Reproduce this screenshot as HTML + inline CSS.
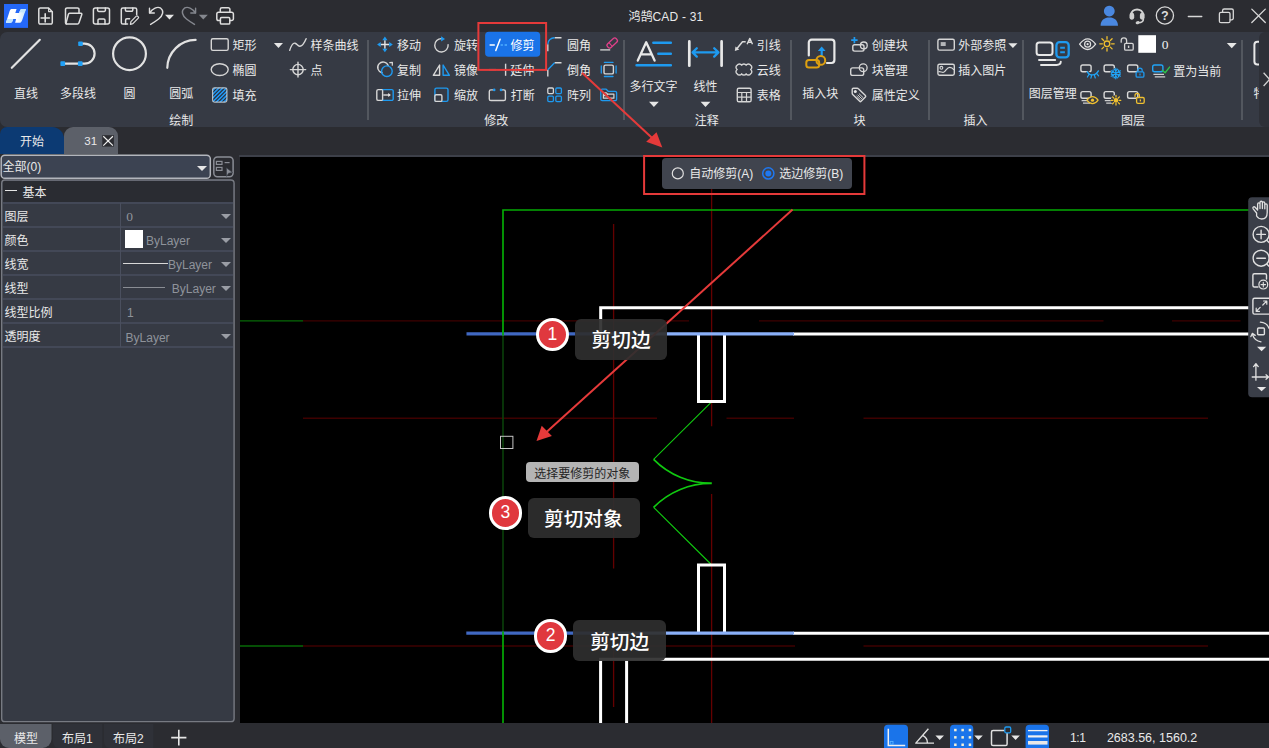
<!DOCTYPE html>
<html lang="zh-CN">
<head>
<meta charset="utf-8">
<title>鸿鹄CAD - 31</title>
<style>
*{box-sizing:border-box;margin:0;padding:0}
html,body{width:1269px;height:748px;overflow:hidden;background:#2b2c31}
body{position:relative;font-family:"Liberation Sans","Noto Sans CJK SC",sans-serif;font-size:12px;color:#e8e8e8}
.abs{position:absolute}
.t{position:absolute;white-space:nowrap;line-height:14px;font-size:12px;color:#e9e9e9}
#titlebar{left:0;top:0;width:1269px;height:32px;background:#2b2c31}
#ribbon{left:0;top:32px;width:1269px;height:95px;background:#363a44;border-radius:7px 0 0 7px}
#scroller{left:1259px;top:32px;width:10px;height:95px;background:#2e3037;border-radius:6px 0 0 6px}
.sep{position:absolute;top:40px;width:2px;height:80px;background:#53575f}
#tabstrip{left:0;top:127px;width:1269px;height:28px;background:#2b2c31}
#tab1{left:0;top:127px;width:64px;height:27px;background:#0c3a73;border-radius:7px 12px 0 0}
#tab2{left:64px;top:127px;width:54px;height:27px;background:#5c6069;border-radius:9px 9px 0 0}
#canvas{left:240px;top:157px;width:1029px;height:566px;background:#000}
#cborder{left:239px;top:155px;width:1030px;height:2px;background:#3d4049}
#status{left:0;top:723px;width:1269px;height:25px;background:#2b2c31}
/* property panel */
#combo{left:1px;top:155px;width:209px;height:23px;background:#3c4352;border-radius:4px}
#listbtn{left:213px;top:156px;width:21px;height:22px;border-radius:5px}
#panel{left:1px;top:180px;width:233px;height:542px;background:#363a44;border-radius:4px}
#phead{left:3px;top:181px;width:230px;height:21px;background:#2a2c32}
.row{position:absolute;left:3px;width:230px;height:2px;background:#434857}
#colsep{left:120px;top:203px;width:1px;height:144px;background:#4a4f5e}
.v{color:#8f939b}
.tri{position:absolute;width:0;height:0;border-left:5px solid transparent;border-right:5px solid transparent;border-top:5px solid #e6e6e6}
.trig{border-top-color:#9a9da5}

.c{display:inline-block}
.lab{background:rgba(46,46,46,.93);border-radius:6px}
.lt{font-size:19.7px;color:#fff;font-weight:500}
.badge{width:33.4px;height:33.4px;border-radius:50%;background:#e0383e;border:3px solid #fff;color:#fff;font-size:17.5px;line-height:27.4px;text-align:center}
</style>
</head>
<body>
<div id="titlebar" class="abs"></div>
<div id="ribbon" class="abs"></div>
<div class="sep" style="left:367.2px"></div>
<div class="sep" style="left:623px"></div>
<div class="sep" style="left:789.6px"></div>
<div class="sep" style="left:928.2px"></div>
<div class="sep" style="left:1022.2px"></div>
<div class="sep" style="left:1241px"></div>
<div id="tabstrip" class="abs"></div>
<div id="tab1" class="abs"></div>
<div id="tab2" class="abs"></div>
<div id="status" class="abs"></div>
<div id="cborder" class="abs"></div>
<div id="canvas" class="abs"></div>

<!-- PROPERTY PANEL -->
<div id="combo" class="abs"></div>
<div id="listbtn" class="abs"></div>
<div id="panel" class="abs"></div>
<div id="phead" class="abs"></div>
<div class="row" style="top:202px"></div>
<div class="row" style="top:226px"></div>
<div class="row" style="top:250px"></div>
<div class="row" style="top:274px"></div>
<div class="row" style="top:298px"></div>
<div class="row" style="top:322px"></div>
<div class="row" style="top:346px"></div>
<div id="colsep" class="abs"></div>
<svg class="abs" style="left:0;top:0" width="1269" height="748" viewBox="0 0 1269 748">
<!-- title bar -->
<g>
<defs>
<linearGradient id="lg1" x1="0" y1="0" x2="1" y2="0"><stop offset="0.55" stop-color="#fff"/><stop offset="1" stop-color="#c4e4fb"/></linearGradient>
</defs>
<rect x="4" y="4" width="24" height="23.9" fill="#2468f8"/>
<path d="M11.4 8.9 H16.6 L15.3 12.9 H19 L20.4 9.8 Q20.8 8.9 21.8 8.9 H26 L22.4 19.4 Q21.4 22.8 19.4 22.8 H15.1 L16.1 19 H13.2 L12.4 21.2 Q11.8 22.8 10.2 22.8 H5.9 L9.2 12.6 Q10 8.9 11.4 8.9 Z" fill="url(#lg1)"/>
<path d="M5.9 22.8 H10.2 Q11.8 22.8 12.4 21.2 L13.2 19 L7.2 19 Z" fill="#c2e6fd"/>
<path d="M21.8 8.9 H26 L24.7 12.6 L19.3 12.3 L20.4 9.8 Q20.8 8.9 21.8 8.9 Z" fill="#c2e6fd"/>
</g>
<g fill="none" stroke="#dedede" stroke-width="1.5" stroke-linejoin="round" stroke-linecap="round">
<!-- new -->
<path d="M40.3 7.9 H48.6 L52.3 11.7 V22.6 A1.5 1.5 0 0 1 50.8 24.1 H40.3 A1.5 1.5 0 0 1 38.8 22.6 V9.4 A1.5 1.5 0 0 1 40.3 7.9 Z"/>
<path d="M48.6 8.2 V11.6 H52" stroke-width="1.1"/>
<path d="M45.2 13.9 V22 M41.1 18 H49.4" stroke-width="1.6"/>
<!-- open -->
<path d="M66.6 24 A1.3 1.3 0 0 1 65.5 22.7 V9.4 A1.5 1.5 0 0 1 67 7.9 H77.5 A1.5 1.5 0 0 1 79 9.4 V13"/>
<path d="M69.6 13.3 H81 A0.9 0.9 0 0 1 81.8 14.5 L78.9 22.9 A1.6 1.6 0 0 1 77.4 24.1 H66.9 A0.9 0.9 0 0 1 66.1 22.9 L68.4 14.3 A1.4 1.4 0 0 1 69.6 13.3 Z"/>
<!-- save -->
<rect x="93.4" y="7.9" width="16.1" height="16.2" rx="2"/>
<path d="M97.6 8 V10.2 A1.2 1.2 0 0 0 98.8 11.4 H104.2 A1.2 1.2 0 0 0 105.4 10.2 V8"/>
<path d="M98 24 V20.2 A1.3 1.3 0 0 1 99.3 18.9 H103.7 A1.3 1.3 0 0 1 105 20.2 V24"/>
<!-- save as -->
<path d="M127.5 24.1 H122.9 A1.6 1.6 0 0 1 121.3 22.5 V9.5 A1.6 1.6 0 0 1 122.9 7.9 H135.1 A1.6 1.6 0 0 1 136.7 9.5 V14.5"/>
<path d="M125.4 8 V10 A1.2 1.2 0 0 0 126.6 11.2 H131.6 A1.2 1.2 0 0 0 132.8 10 V8"/>
<path d="M125.6 24 V20 A1.2 1.2 0 0 1 126.8 18.8 H129.6"/>
<path d="M130.4 24.3 L130.9 21.6 L136.3 16.2 A1 1 0 0 1 137.7 16.2 L138.3 16.8 A1 1 0 0 1 138.3 18.2 L132.9 23.6 Z" stroke-width="1.2"/>
<!-- undo -->
<path d="M149.5 8.2 V13 H154.3" stroke-width="1.4"/>
<path d="M149.8 12.8 C152.5 8.5 157.5 6 160.7 8.2 C164.2 10.8 163 15.5 158.6 19 C156 21 153 23 150.6 24.4" stroke-width="1.4"/>
<!-- print -->
<path d="M220.3 12.3 V9.3 A1.6 1.6 0 0 1 221.9 7.7 H228.3 A1.6 1.6 0 0 1 229.9 9.3 V12.3"/>
<path d="M220.4 20.6 H218.6 A1.8 1.8 0 0 1 216.8 18.8 V14.1 A1.8 1.8 0 0 1 218.6 12.3 H231.6 A1.8 1.8 0 0 1 233.4 14.1 V18.8 A1.8 1.8 0 0 1 231.6 20.6 H229.8"/>
<rect x="220.4" y="17.6" width="9.4" height="6.5" rx="1.2"/>
</g>
<!-- redo (disabled) -->
<g fill="none" stroke="#84878e" stroke-width="1.4" stroke-linejoin="round" stroke-linecap="round">
<path d="M195.6 8.2 V13 H190.8"/>
<path d="M195.3 12.8 C192.6 8.5 187.6 6 184.4 8.2 C180.9 10.8 182.1 15.5 186.5 19 C189.1 21 192.1 23 194.5 24.4"/>
</g>
<path d="M165 14.7 H174 L169.5 19.5 Z" fill="#e6e6e6"/>
<path d="M198.8 14.7 H207.8 L203.3 19.5 Z" fill="#84878e"/>
<!-- window controls -->
<g fill="none" stroke="#d8d8d8" stroke-width="1.3" stroke-linecap="round" stroke-linejoin="round">
<path d="M1109.3 5.7 A5.4 5.4 0 1 1 1109.29 5.7 Z M1100.6 25.8 C1100.6 20 1104.3 17.4 1109.3 17.4 C1114.3 17.4 1118 20 1118 25.8 Z" fill="#4a88e0" stroke="none"/>
<circle cx="1164.9" cy="15.5" r="8.6"/>
<path d="M1188.3 16.5 H1201.8"/>
<rect x="1219.4" y="12.3" width="10.6" height="10.4" rx="1.5"/>
<path d="M1222.6 12.2 V10.6 A1.6 1.6 0 0 1 1224.2 9 H1231.7 A1.6 1.6 0 0 1 1233.3 10.6 V18.2 A1.6 1.6 0 0 1 1231.7 19.8 H1230.2"/>
<path d="M1251.8 9.1 L1265.3 22.5 M1265.3 9.1 L1251.8 22.5"/>
<!-- headset -->
<path d="M1130.9 14.6 A6.3 6.3 0 0 1 1143.3 14.6" stroke-width="2" stroke="#d2d2d2"/>
<path d="M1143.4 19 C1143.4 21.6 1141.4 22.7 1138.4 22.8" stroke-width="1.6" stroke="#d2d2d2"/>
</g>
<g fill="#cfcfcf">
<rect x="1129.5" y="12.8" width="4.7" height="6.9" rx="2.1"/>
<rect x="1139.9" y="12.8" width="4.7" height="6.9" rx="2.1"/>
<ellipse cx="1137.6" cy="22.7" rx="2" ry="1.5" transform="rotate(-18 1137.6 22.7)"/>
</g>

<text x="1164.9" y="19.9" font-family="Liberation Sans, sans-serif" font-size="12.5" font-weight="bold" text-anchor="middle" fill="#dcdcdc">?</text>

<!-- DRAW group -->
<g fill="none" stroke="#e2e2e2" stroke-linecap="round" stroke-linejoin="round">
<path d="M11.8 67.8 L39.8 39.8" stroke-width="2.2"/>
<path d="M62.8 63.6 H84.6 A10 10 0 0 0 84.6 43.6 H80.5" stroke-width="2.2"/>
<circle cx="129.5" cy="53.7" r="16.4" stroke-width="2.2"/>
<path d="M167.3 67.8 A28.5 28.5 0 0 1 195.6 39.9" stroke-width="2.2"/>
<g stroke="#d6d6d6" stroke-width="1.4">
<rect x="211.3" y="38.8" width="16.9" height="11.6" rx="1.6"/>
<ellipse cx="219.7" cy="69.6" rx="8.5" ry="5.9"/>
<path d="M289.7 50.4 C291.2 45.6 292.8 42.6 295 43.2 C297.3 43.8 297.6 46.6 300 46.2 C302.6 45.7 304.6 42.4 306.1 38.7"/>
<circle cx="298" cy="69.6" r="5.2"/>
<path d="M290.3 69.6 H305.7 M298 62.1 V77.1"/>
</g>
</g>
<g fill="#21a0f6">
<rect x="78.2" y="41.4" width="4.6" height="4.6" rx="0.8"/>
<rect x="60.4" y="61.3" width="4.7" height="4.7" rx="0.8"/>
<rect x="77.9" y="61.3" width="4.7" height="4.7" rx="0.8"/>
</g>
<!-- hatch -->
<g>
<clipPath id="hc"><rect x="212.4" y="87.6" width="14.7" height="14.7" rx="1.8"/></clipPath>
<rect x="212.4" y="87.6" width="14.7" height="14.7" rx="1.8" fill="#2a2a30"/>
<g clip-path="url(#hc)" stroke="#2196f3" stroke-width="1.65">
<path d="M198 105 L218 85 M201.85 105 L221.85 85 M205.7 105 L225.7 85 M209.56 105 L229.56 85 M213.4 105 L233.4 85 M217.25 105 L237.25 85 M221.1 105 L241.1 85"/>
</g>
<rect x="212.6" y="87.8" width="14.3" height="14.3" rx="1.8" fill="none" stroke="#d8d8d8" stroke-opacity="0.8" stroke-width="1.2"/>
</g>
<path d="M273.9 43 H283 L278.45 48 Z" fill="#e6e6e6"/>

<!-- MODIFY group -->
<!-- move -->
<g>
<path d="M380.6 44.5 H389.2 M384.9 40.2 V48.8" stroke="#e6e6e6" stroke-width="1.4" fill="none"/>
<path d="M384.9 36.6 L387.5 40.2 H382.3 Z M384.9 52.3 L387.5 48.7 H382.3 Z M377.1 44.5 L380.7 41.9 V47.1 Z M392.8 44.5 L389.2 41.9 V47.1 Z" fill="#1e9af0"/>
</g>
<!-- rotate -->
<path d="M441.6 38.6 A6.7 6.7 0 1 0 448.1 44.6" fill="none" stroke="#d6d6d6" stroke-width="1.4" stroke-linecap="round"/>
<path d="M441.1 36.3 L445 38.9 L441.1 41.4 Z" fill="#1e9af0"/>
<!-- copy -->
<path d="M382 72.7 A5.4 5.4 0 1 1 388.2 65.6" fill="none" stroke="#d6d6d6" stroke-width="1.4" stroke-linecap="round"/>
<path d="M389.8 62.6 L392.4 62.4 L392.3 65.2" fill="none" stroke="#d6d6d6" stroke-width="1.2" stroke-linecap="round" stroke-linejoin="round"/>
<circle cx="386.9" cy="71.2" r="5.3" fill="none" stroke="#1e9af0" stroke-width="1.4"/>
<!-- mirror -->
<path d="M439.6 65 V75.3 H433.3 Z" fill="none" stroke="#d6d6d6" stroke-width="1.4" stroke-linejoin="round"/>
<path d="M443.1 65 V75.3 H449.4 Z" fill="none" stroke="#1e9af0" stroke-width="1.4" stroke-linejoin="round"/>
<!-- stretch -->
<path d="M382.6 89.6 H378.3 A1.5 1.5 0 0 0 376.8 91.1 V98.9 A1.5 1.5 0 0 0 378.3 100.4 H382.6 Z" fill="none" stroke="#d6d6d6" stroke-width="1.4" stroke-linejoin="round"/>
<path d="M382.6 89.6 H391.7 A1.5 1.5 0 0 1 393.2 91.1 V98.9 A1.5 1.5 0 0 1 391.7 100.4 H382.6" fill="none" stroke="#1e9af0" stroke-width="1.4"/>
<path d="M383.3 95 H389.6" stroke="#e6e6e6" stroke-width="1.3" fill="none"/>
<path d="M388.2 92.9 L390.9 95 L388.2 97.1 Z" fill="#e6e6e6"/>
<!-- scale -->
<rect x="434.9" y="88.1" width="13.1" height="13.3" rx="1.6" fill="none" stroke="#1e9af0" stroke-width="1.4"/>
<rect x="434.9" y="94.7" width="7" height="6.7" rx="1.2" fill="#363a44" stroke="#d6d6d6" stroke-width="1.4"/>
<!-- trim button -->
<rect x="485.1" y="31.8" width="55.1" height="25" rx="3.8" fill="#1a73e8"/>
<path d="M489.6 45 H494.8" stroke="#fff" stroke-width="1.5" fill="none"/>
<path d="M495.8 50.6 L500.1 39.3" stroke="#fff" stroke-width="1.5" fill="none" stroke-linecap="round"/>
<path d="M500.6 45 H502.9 M504.6 45 H507" stroke="#4fb0ff" stroke-width="1.3" fill="none"/>
<!-- extend -->
<path d="M489 69.6 H496" stroke="#d6d6d6" stroke-width="1.3" fill="none"/><path d="M497.6 69.6 H500 M501.6 69.6 H504.2" stroke="#1e9af0" stroke-width="1.2" fill="none"/>
<path d="M505.6 63.7 V75.8" stroke="#d6d6d6" stroke-width="1.4" fill="none"/>
<!-- break -->
<path d="M492.6 89.9 H490.9 A1.6 1.6 0 0 0 489.3 91.5 V98.9 A1.6 1.6 0 0 0 490.9 100.5 H503.8 A1.6 1.6 0 0 0 505.4 98.9 V91.5 A1.6 1.6 0 0 0 503.8 89.9 H502.3" fill="none" stroke="#d6d6d6" stroke-width="1.4" stroke-linecap="round"/>
<circle cx="494.2" cy="89.9" r="1.3" fill="#1e9af0"/><circle cx="501" cy="89.9" r="1.3" fill="#1e9af0"/>
<!-- fillet -->
<path d="M554.6 37.7 H561.5 M547.8 44.2 V51.2" stroke="#d6d6d6" stroke-width="1.4" fill="none"/>
<path d="M547.8 44.2 A6.6 6.6 0 0 1 554.6 37.7" stroke="#1e9af0" stroke-width="1.4" fill="none"/>
<!-- chamfer -->
<path d="M554.6 62.7 H561.5 M547.8 69.8 V76.6" stroke="#d6d6d6" stroke-width="1.4" fill="none"/>
<path d="M547.8 69.8 L554.6 62.7" stroke="#1e9af0" stroke-width="1.4" fill="none"/>
<!-- array -->
<g fill="none" stroke-width="1.3">
<rect x="547.8" y="88" width="5.6" height="5.6" rx="1.1" stroke="#d6d6d6"/>
<rect x="555.8" y="88" width="5.6" height="5.6" rx="1.1" stroke="#1e9af0"/>
<rect x="547.8" y="96.1" width="5.6" height="5.6" rx="1.1" stroke="#1e9af0"/>
<rect x="555.8" y="96.1" width="5.6" height="5.6" rx="1.1" stroke="#1e9af0"/>
</g>
<!-- erase -->
<path d="M600.2 49.9 H610.2" stroke="#d6d6d6" stroke-width="1.3" fill="none"/>
<g transform="rotate(-42 612.2 43)"><rect x="606.3" y="40.5" width="11.8" height="5" rx="2.1" fill="none" stroke="#e0408a" stroke-width="1.3"/><path d="M610 40.6 V45.4" stroke="#e0408a" stroke-width="1.1"/></g>
<!-- offset -->
<rect x="604" y="65.1" width="9.4" height="8.8" rx="1.5" fill="none" stroke="#d6d6d6" stroke-width="1.4"/>
<path d="M604.4 62.4 H613 M604.4 76.5 H613 M601.3 66 V73 M616.1 66 V73" stroke="#1e9af0" stroke-width="1.3" fill="none" stroke-linecap="round"/>
<!-- folder -->
<path d="M600.8 98.6 V90.6 A1.4 1.4 0 0 1 602.2 89.2 H606.2 L608.2 91.3 H615.2 A1.4 1.4 0 0 1 616.6 92.7 V99.2 A1.4 1.4 0 0 1 615.2 100.6 H602.2 A1.4 1.4 0 0 1 600.8 99.2 Z" fill="none" stroke="#1e9af0" stroke-width="1.3" stroke-linejoin="round"/>
<path d="M603.4 97.6 V92.8 H606.4 L607.7 94.2 H613.9 V98.2 H603.4 Z M607.6 94.3 L606.3 95.6 H603.6" fill="none" stroke="#d6d6d6" stroke-width="1.2" stroke-linejoin="round"/>

<!-- ANNOTATION -->
<path d="M637.8 60.6 L646.2 42.2 L654.6 60.6 M641 54.4 H651.4" fill="none" stroke="#e8e8e8" stroke-width="2.3" stroke-linejoin="round" stroke-linecap="round"/>
<path d="M653.4 42.7 H670.8 M658.4 53.7 H670.8 M636.6 65.2 H670.8" stroke="#1e9af0" stroke-width="2.6" fill="none" stroke-linecap="round"/>
<path d="M689.3 41.4 V65.7 M721.6 41.4 V65.7" stroke="#e8e8e8" stroke-width="2.7" fill="none" stroke-linecap="round"/>
<path d="M692.8 52.4 H718.2 M696.8 48.2 L692.6 52.4 L696.8 56.6 M714.2 48.2 L718.4 52.4 L714.2 56.6" stroke="#1e9af0" stroke-width="2.3" fill="none" stroke-linecap="round" stroke-linejoin="round"/>
<path d="M649 101.8 H658.8 L653.9 107 Z M700.6 101.8 H710.4 L705.5 107 Z" fill="#e6e6e6"/>
<!-- leader -->
<path d="M736.8 48.8 L742.5 41.7 H745.7" fill="none" stroke="#dadada" stroke-width="1.5" stroke-linejoin="round"/>
<path d="M734.8 51 L735.5 46.6 L739.3 49.6 Z" fill="#dadada"/>
<path d="M747.1 44.2 L749.8 38.4 L752.5 44.2 M748.2 42.3 H751.4" fill="none" stroke="#dadada" stroke-width="1.4" stroke-linejoin="round"/>
<!-- cloud -->
<path d="M737.2 65.2 a2.6 2.6 0 0 1 4.47 0 a2.6 2.6 0 0 1 4.47 0 a2.6 2.6 0 0 1 4.46 0 a2.5 2.5 0 0 1 0 4.3 a2.5 2.5 0 0 1 0 4.3 a2.6 2.6 0 0 1 -4.46 0 a2.6 2.6 0 0 1 -4.47 0 a2.6 2.6 0 0 1 -4.47 0 a2.5 2.5 0 0 1 0 -4.3 a2.5 2.5 0 0 1 0 -4.3 Z" fill="none" stroke="#d6d6d6" stroke-width="1.4" stroke-linejoin="round"/>
<!-- table -->
<rect x="737.3" y="88.2" width="13.8" height="13.6" rx="1.6" fill="none" stroke="#d6d6d6" stroke-width="1.4"/>
<path d="M737.3 92.5 H751.1 M737.3 97.2 H751.1 M741.8 92.5 V101.8 M746.5 92.5 V101.8" stroke="#d6d6d6" stroke-width="1.2" fill="none"/>
<!-- BLOCK -->
<path d="M808.8 55.4 V42.6 A2.9 2.9 0 0 1 811.7 39.7 H831.5 A2.9 2.9 0 0 1 834.4 42.6 V60.1 A2.9 2.9 0 0 1 831.5 63 H827" fill="none" stroke="#e8e8e8" stroke-width="2.2" stroke-linecap="round"/>
<path d="M821.7 56 V50" fill="none" stroke="#1e9af0" stroke-width="2.2"/><path d="M821.7 46.4 L825.6 51 H817.8 Z" fill="#1e9af0"/>
<rect x="806.3" y="60.1" width="12.9" height="7.5" rx="2.6" fill="none" stroke="#dea010" stroke-width="2"/>
<circle cx="820.8" cy="60.4" r="4.4" fill="none" stroke="#dea010" stroke-width="2"/>
<!-- create block -->
<path d="M851.2 40.1 H857.6 M854.4 36.9 V43.3" stroke="#1e9af0" stroke-width="1.7" fill="none"/>
<rect x="852.8" y="44.8" width="11.2" height="6.3" rx="1.8" fill="none" stroke="#d6d6d6" stroke-width="1.4"/>
<circle cx="863.8" cy="45.4" r="3.4" fill="none" stroke="#d6d6d6" stroke-width="1.3"/>
<!-- block manager -->
<rect x="850.7" y="67.9" width="13" height="7.5" rx="2" fill="none" stroke="#d6d6d6" stroke-width="1.4"/>
<circle cx="863.2" cy="67.8" r="3.9" fill="none" stroke="#d6d6d6" stroke-width="1.3"/>
<!-- attribute def (tag) -->
<path d="M853.4 88.3 H857.2 A1.6 1.6 0 0 1 858.4 88.8 L865.4 95.6 A1 1 0 0 1 865.4 97 L861.1 101.3 A1 1 0 0 1 859.7 101.3 L852.7 94.4 A1.6 1.6 0 0 1 852.2 93.2 V89.5 A1.2 1.2 0 0 1 853.4 88.3 Z" fill="none" stroke="#d6d6d6" stroke-width="1.4" stroke-linejoin="round"/>
<circle cx="855.3" cy="91.5" r="1.5" fill="#e6e6e6"/>
<path d="M858.9 93.5 L863.3 97.8 M857.7 94.8 L861.9 98.9 M856.6 96 L860.6 99.9" stroke="#d6d6d6" stroke-width="1" fill="none"/>
<!-- INSERT -->
<rect x="937.9" y="39.3" width="16.4" height="10.8" rx="1.6" fill="none" stroke="#d6d6d6" stroke-width="1.4"/>
<rect x="940.7" y="42.1" width="5" height="3.9" fill="#b4b6ba"/>
<rect x="937.9" y="64.2" width="16.4" height="11" rx="1.6" fill="none" stroke="#d6d6d6" stroke-width="1.4"/>
<circle cx="941.4" cy="67.8" r="1.4" fill="none" stroke="#d6d6d6" stroke-width="1.1"/>
<path d="M938.5 71.7 C940.5 71.2 942 72.7 943.6 72.2 C946 71.5 946.6 67.4 949.8 67.4 C951.8 67.4 953 68.6 954 69.8" fill="none" stroke="#d6d6d6" stroke-width="1.2"/>
<path d="M1008.3 43.2 H1017.5 L1012.9 48.1 Z" fill="#e6e6e6"/>
<!-- LAYER manager -->
<rect x="1036.6" y="42.4" width="15.9" height="12.7" rx="2.6" fill="none" stroke="#e8e8e8" stroke-width="2"/>
<path d="M1039 60 H1055.2 M1041 65 H1056.6 C1059.4 65 1060.8 63.6 1060.8 61.6" fill="none" stroke="#e8e8e8" stroke-width="1.9" stroke-linecap="round"/>
<rect x="1056.4" y="42.2" width="12.3" height="15.2" rx="3.2" fill="#363a44" stroke="#1e9af0" stroke-width="2.3"/>
<path d="M1060.2 47.8 H1064.9 M1060.2 52.2 H1064.9" stroke="#1e9af0" stroke-width="2" fill="none"/>
<!-- eye -->
<path d="M1079.6 44.2 C1082.6 40.2 1085.3 38.9 1087.6 38.9 C1089.9 38.9 1092.6 40.2 1095.6 44.2 C1092.6 48.2 1089.9 49.5 1087.6 49.5 C1085.3 49.5 1082.6 48.2 1079.6 44.2 Z" fill="none" stroke="#e0e0e0" stroke-width="1.3" stroke-linejoin="round"/>
<circle cx="1087.6" cy="44.2" r="3" fill="none" stroke="#e0e0e0" stroke-width="1.2"/><circle cx="1087.6" cy="44.2" r="1.1" fill="#e0e0e0"/>
<!-- sun -->
<g stroke="#f0c030" stroke-width="1.3" fill="none" stroke-linecap="round">
<circle cx="1107" cy="43.8" r="2.8"/>
<path d="M1107 36.6 V39.2 M1107 48.4 V51 M1099.8 43.8 H1102.4 M1111.6 43.8 H1114.2 M1101.9 38.7 L1103.7 40.5 M1110.3 47.1 L1112.1 48.9 M1101.9 48.9 L1103.7 47.1 M1110.3 40.5 L1112.1 38.7"/>
</g>
<!-- unlock -->
<rect x="1124.6" y="43.3" width="8.6" height="6.9" rx="1.2" fill="none" stroke="#d6d6d6" stroke-width="1.3"/>
<path d="M1121.2 42.2 V40.6 A2.7 2.7 0 0 1 1126.6 40.6 V43.2" fill="none" stroke="#d6d6d6" stroke-width="1.3" stroke-linecap="round"/>
<path d="M1128.6 45.6 V48" stroke="#d6d6d6" stroke-width="1.4"/>
<rect x="1138.3" y="35.2" width="17.7" height="17.6" fill="#fff"/>
<path d="M1226.8 43.1 H1236.7 L1231.75 48.3 Z" fill="#e6e6e6"/>
<!-- row2/3 small monitors -->
<g fill="none" stroke="#d8d8d8" stroke-width="1.4">
<rect x="1080.9" y="65" width="10.2" height="6.7" rx="1.8"/>
<rect x="1104.1" y="65" width="10.2" height="6.7" rx="1.8"/>
<rect x="1127.6" y="65" width="10.2" height="6.7" rx="1.8"/>
<rect x="1080.9" y="91.6" width="10.2" height="6.7" rx="1.8"/>
<rect x="1104.1" y="91.6" width="10.2" height="6.7" rx="1.8"/>
<rect x="1127.6" y="91.6" width="10.2" height="6.7" rx="1.8"/>
</g>
<g stroke="#cfcfcf" stroke-width="1.3" fill="none">
<path d="M1081.6 100.6 H1088.6 M1083 103.2 H1090"/>
<path d="M1104.8 100.6 H1111.8 M1106.2 103.2 H1113"/>
<path d="M1153.4 74.4 H1164 M1154.8 76.8 H1165.2"/>
</g>
<!-- layer off: blue closed eye -->
<path d="M1087.2 71.8 C1089.6 76 1095.4 76.2 1098.4 70.9" fill="none" stroke="#363a44" stroke-width="3.4"/>
<path d="M1087.2 71.8 C1089.6 76 1095.4 76.2 1098.4 70.9" fill="none" stroke="#21a4f6" stroke-width="1.4" stroke-linecap="round"/>
<path d="M1089 74.4 L1087.4 77 M1091.6 75.4 L1090.9 78.2 M1094.4 75.3 L1095.3 78 M1096.8 73.6 L1098.6 75.8" stroke="#21a4f6" stroke-width="1.2" fill="none" stroke-linecap="round"/>
<!-- freeze: snowflake -->
<circle cx="1115.8" cy="73.5" r="5.6" fill="#363a44"/>
<g stroke="#21a4f6" stroke-width="1.2" fill="none" stroke-linecap="round">
<path d="M1115.8 68.2 V78.8 M1111.2 70.85 L1120.4 76.15 M1111.2 76.15 L1120.4 70.85"/>
<path d="M1114.2 69.2 L1115.8 70.6 L1117.4 69.2 M1114.2 77.8 L1115.8 76.4 L1117.4 77.8 M1111.3 72.9 L1113.3 72.1 L1113 70 M1120.3 74.1 L1118.3 74.9 L1118.6 77 M1111.3 74.1 L1113.3 74.9 L1113 77 M1120.3 72.9 L1118.3 72.1 L1118.6 70"/>
</g>
<!-- lock blue -->
<rect x="1136.1" y="71.9" width="7.8" height="5.2" rx="1.2" fill="#363a44" stroke="#1e9af0" stroke-width="1.3"/>
<path d="M1137.8 71.8 V70.4 A2.2 2.2 0 0 1 1142.2 70.4 V71.8" fill="none" stroke="#1e9af0" stroke-width="1.2"/>
<path d="M1140 73.6 V75.4" stroke="#1e9af0" stroke-width="1.2"/>
<!-- set current -->
<rect x="1152.7" y="65" width="10.2" height="6.7" rx="1.8" fill="none" stroke="#21a4f6" stroke-width="1.4"/>
<path d="M1162.3 70.4 L1165.1 72.7 L1169.6 67.1" fill="none" stroke="#2fc24a" stroke-width="1.4" stroke-linecap="round" stroke-linejoin="round"/>
<!-- layer on: yellow eye -->
<path d="M1086.9 100.2 C1089 97.4 1090.9 96.7 1092.5 96.7 C1094.1 96.7 1096 97.4 1098.1 100.2 C1096 103 1094.1 103.7 1092.5 103.7 C1090.9 103.7 1089 103 1086.9 100.2 Z" fill="#363a44" stroke="#f0c030" stroke-width="1.2" stroke-linejoin="round"/>
<circle cx="1092.5" cy="100.2" r="1.6" fill="#f0c030"/>
<!-- thaw: yellow sun -->
<circle cx="1116" cy="100.3" r="5.3" fill="#363a44"/>
<g stroke="#f0c030" stroke-width="1.3" fill="none" stroke-linecap="round">
<circle cx="1116" cy="100.3" r="1.7" fill="#f0c030"/>
<path d="M1116 95.5 V97.1 M1116 103.5 V105.1 M1111.2 100.3 H1112.8 M1119.2 100.3 H1120.8 M1112.6 96.9 L1113.7 98 M1118.3 102.6 L1119.4 103.7 M1112.6 103.7 L1113.7 102.6 M1118.3 98 L1119.4 96.9"/>
</g>
<!-- unlock yellow -->
<rect x="1136.6" y="97.5" width="7.6" height="5.8" rx="1.3" fill="#363a44" stroke="#f0c030" stroke-width="1.3"/>
<path d="M1135 96.6 V95.6 A2.2 2.2 0 0 1 1139.4 95.6 V97.4" fill="none" stroke="#f0c030" stroke-width="1.2" stroke-linecap="round"/>
<path d="M1140.4 99.4 V101.4" stroke="#f0c030" stroke-width="1.3"/>
<!-- cut-off next group icon -->
<path d="M1260 41.8 H1257.4 A3 3 0 0 0 1254.4 44.8 V61.6 A3 3 0 0 0 1257.4 64.6 H1260" fill="none" stroke="#e8e8e8" stroke-width="2"/>

<!-- tab close box -->
<rect x="102.3" y="135.2" width="11.6" height="11.4" fill="#2b2c31"/>
<path d="M103.3 136.2 L112.9 145.6 M112.9 136.2 L103.3 145.6" stroke="#f0f0f0" stroke-width="1.2" fill="none"/>
<!-- panel borders -->
<rect x="1.2" y="155.2" width="209.1" height="23.1" rx="3.6" fill="none" stroke="#b2b5bc" stroke-width="1.5"/>
<rect x="213.8" y="157" width="19.3" height="19.7" rx="3.6" fill="none" stroke="#8a8d95" stroke-width="1.5"/>
<rect x="1.7" y="180" width="232.4" height="541.6" rx="3.2" fill="none" stroke="#777a82" stroke-width="1.4"/>
<!-- list button icon -->
<g fill="none" stroke="#8a8d95" stroke-width="1.2">
<rect x="216.4" y="161.4" width="5.6" height="3"/>
<rect x="216.4" y="167.4" width="5.6" height="3"/>
<path d="M224.6 162.6 H229.6"/>
</g>
<path d="M226.4 167.8 L232.6 172.6 L228.6 173.2 L226.6 176.4 Z" fill="#8a8d95" stroke="#363a44" stroke-width="0.6"/>
<!-- status bar -->
<path d="M0 724 H51.5 V739 A9 9 0 0 1 42.5 748 H9 A9 9 0 0 1 0 739 Z" fill="#5c6069"/>
<path d="M53 724 H102.4 V748 H59 A6 6 0 0 1 53 742 Z" fill="#2f3138"/>
<path d="M104 724 H153.4 V748 H110 A6 6 0 0 1 104 742 Z" fill="#2f3138"/>
<path d="M171.2 737.6 H186.4 M178.8 729.8 V745.4" stroke="#e6e6e6" stroke-width="1.6" fill="none"/>
<rect x="884" y="724.8" width="24" height="26" rx="4" fill="#1a74ea"/>
<path d="M888.3 728.8 V745.5 H905.2" fill="none" stroke="#f0f0f0" stroke-width="1.5"/>
<rect x="890.2" y="741.4" width="2.8" height="2.8" fill="none" stroke="#59b4ff" stroke-width="0.9"/>
<path d="M928.4 728.8 L915.8 743.1 H934 M923 735.7 A8 8 0 0 1 927.4 743" fill="none" stroke="#e0e0e0" stroke-width="1.4" stroke-linejoin="round"/>
<path d="M935.4 735.6 H944 L939.7 739.9 Z M974.2 735.6 H982.8 L978.5 739.9 Z M1011.3 735.6 H1019.9 L1015.6 739.9 Z" fill="#e6e6e6"/>
<rect x="950" y="724.8" width="23.3" height="26" rx="4" fill="#1a74ea"/>
<g fill="#f3f0d8">
<rect x="954.1" y="728.8" width="2.5" height="2.5"/><rect x="961.4" y="728.8" width="2.5" height="2.5"/><rect x="968.7" y="728.8" width="2.5" height="2.5"/>
<rect x="954.1" y="736.1" width="2.5" height="2.5"/><rect x="961.4" y="736.1" width="2.5" height="2.5"/><rect x="968.7" y="736.1" width="2.5" height="2.5"/>
<rect x="954.1" y="743.5" width="2.5" height="2.5"/><rect x="961.4" y="743.5" width="2.5" height="2.5"/><rect x="968.7" y="743.5" width="2.5" height="2.5"/>
</g>
<rect x="991.5" y="730.4" width="15.6" height="15.2" rx="1.6" fill="none" stroke="#e0e0e0" stroke-width="1.5"/>
<rect x="1004.8" y="727" width="5.9" height="5.9" rx="1.3" fill="#2b2c31" stroke="#1e9af0" stroke-width="1.3"/>
<rect x="1025.6" y="724.8" width="23.4" height="26" rx="4" fill="#1a74ea"/>
<path d="M1028 730.6 H1047.5" stroke="#f0f0f0" stroke-width="1.3"/>
<path d="M1028 736.4 H1047.5" stroke="#f0f0f0" stroke-width="2.2"/>
<path d="M1028 742.8 H1047.5" stroke="#e8e8e8" stroke-width="3.6"/>

<!-- CANVAS DRAWING -->
<g fill="none" shape-rendering="auto">
<!-- dark red construction lines -->
<g stroke="#3e0000" stroke-width="1.4">
<path d="M303 320.9 H689 M759 320.9 H1103.5 M1172 320.9 H1240.5"/>
<path d="M303 418.3 H657 M726.5 418.3 H794 M863.5 418.3 H1208"/>
<path d="M303 646 H795 M863.5 646 H1208"/>
</g>
<g stroke="#640000" stroke-width="1.3">
<path d="M613.6 224 V568.5 M613.6 646 V707"/>
<path d="M711.6 189 V426.3 M711.6 494 V723"/>
</g>
<!-- green -->
<path d="M240 320.9 H303" stroke="#076a07" stroke-width="1.4"/>
<path d="M240 646 H303" stroke="#076a07" stroke-width="1.4"/>
<path d="M503 334 V633" stroke="#0a400a" stroke-width="1.6"/>
<path d="M503 335 V210 H1249" stroke="#04aa04" stroke-width="1.7"/>
<path d="M503 632 V723" stroke="#04aa04" stroke-width="1.7"/>
<g stroke="#10c810" stroke-width="1.1">
<path d="M710.8 402.7 L653.6 459.3 M653.6 507.3 L710.8 564"/>
<path d="M653.6 459.3 A80.5 80.5 0 0 0 711.8 483.2 M653.6 507.3 A80.5 80.5 0 0 1 711.8 483.4" stroke-width="1.7"/>
</g>
<!-- white walls -->
<g stroke="#fff" stroke-width="3" stroke-linejoin="miter">
<path d="M600.7 335 V307.8 H1249"/>
<path d="M793 333.9 H1249"/>
<path d="M698.5 334 V401.6 H724.5 V334"/>
<path d="M698.5 632.5 V565 H724.5 V632.5"/>
<path d="M793 633.2 H1269"/>
<path d="M600.6 723 V659.2 H1269"/>
<path d="M626.6 660 V723"/>
</g>
<!-- blue cutting edges -->
<path d="M466.5 333.9 H600" stroke="#4068c2" stroke-width="3.2"/>
<path d="M600 333.9 H794" stroke="#8ab0f8" stroke-width="3.2"/>
<path d="M466.3 633.2 H600" stroke="#4068c2" stroke-width="3.2"/>
<path d="M600 633.2 H794" stroke="#8ab0f8" stroke-width="3.2"/>
<path d="M503 330 V335.6" stroke="#04aa04" stroke-width="1.7"/>
<path d="M503 631.4 V636" stroke="#04aa04" stroke-width="1.7"/>
</g>
<!-- pickbox -->
<rect x="500.5" y="436.3" width="12.4" height="12.2" fill="none" stroke="#c4c4c4" stroke-width="1"/>
<!-- right toolbar -->
<path d="M1252.2 197.2 H1269 V397.2 H1252.2 A4 4 0 0 1 1248.2 393.2 V201.2 A4 4 0 0 1 1252.2 197.2 Z" fill="#3a3e48"/>
<g fill="none" stroke="#e0e0e0" stroke-width="1.4" stroke-linecap="round" stroke-linejoin="round">
<path d="M1256.6 213 L1253.2 208.8 C1252.2 207.4 1253.9 206 1255.1 207.2 L1257.6 210 V204.2 C1257.6 202.4 1260 202.4 1260 204.2 V208.6 V202.6 C1260 200.8 1262.4 200.8 1262.4 202.6 V208.6 V203.2 C1262.4 201.4 1264.8 201.4 1264.8 203.2 V208.8 V205.2 C1264.8 203.4 1267.2 203.4 1267.2 205.2 V212.4 C1267.2 216.6 1265 219 1261.6 219 C1259.2 219 1257.8 217.8 1256.6 216 Z" stroke-width="1.3"/>
<circle cx="1261.1" cy="234.4" r="8"/>
<path d="M1256.8 234.4 H1265.4 M1261.1 230.1 V238.7"/>
<circle cx="1261.1" cy="258.2" r="8"/>
<path d="M1256.8 258.2 H1265.4"/>
<path d="M1267 240.4 L1269 242.4 M1267 264.2 L1269 266.2"/>
<path d="M1258 287 H1254.4 A1.5 1.5 0 0 1 1252.9 285.5 V275.2 A1.5 1.5 0 0 1 1254.4 273.7 H1265 A1.5 1.5 0 0 1 1266.5 275.2 V279"/>
<circle cx="1263.3" cy="284.6" r="4.4" stroke-width="1.2"/>
<path d="M1261 284.6 H1265.6 M1263.3 282.3 V286.9" stroke-width="1.1"/>
<path d="M1269 298.3 H1254.6 A1.7 1.7 0 0 0 1252.9 300 V312.4 A1.7 1.7 0 0 0 1254.6 314.1 H1269"/>
<path d="M1262.8 305 L1266.6 301.2 M1263.6 301 H1266.8 V304.2 M1260.2 307.4 L1256.4 311.2 M1259.4 311.4 H1256.2 V308.2" stroke-width="1.2"/>
<rect x="1257.6" y="328" width="6.8" height="6.8" rx="1"/>
<path d="M1260.4 322.2 C1264.2 322.4 1267.6 324.6 1269 328.4 M1252.4 334.4 C1253.8 338.6 1257 341.4 1261 341.8 M1250.9 336.6 L1252.3 333.4 L1255.2 335.4" stroke-width="1.3"/>
<path d="M1255.9 364 V380.2 M1252.2 377 H1268 M1253.6 366.6 L1255.9 363.6 L1258.2 366.6 M1266 374.8 L1268.6 377 L1266 379.2" stroke-width="1.3"/>
</g>
<path d="M1257 346.8 H1266.2 L1261.6 351.2 Z M1257 386.9 H1266.2 L1261.6 391.3 Z" fill="#e6e6e6"/>
<!-- scroller chevron drawn in overlay 2 -->

</svg>
<aside id="properties">
<span class="t" style="left:2.6px;top:160px;"><span class="c" style="width:24px">全部</span>(0)</span>
<span class="t" style="left:22.6px;top:185.8px;"><span class="c" style="width:24px">基本</span></span>
<span class="t" style="left:4.6px;top:210.4px;"><span class="c" style="width:24px">图层</span></span>
<span class="t" style="left:4.6px;top:234.4px;"><span class="c" style="width:24px">颜色</span></span>
<span class="t" style="left:4.6px;top:258.4px;"><span class="c" style="width:24px">线宽</span></span>
<span class="t" style="left:4.6px;top:282.4px;"><span class="c" style="width:24px">线型</span></span>
<span class="t" style="left:4.6px;top:306.4px;"><span class="c" style="width:48px">线型比例</span></span>
<span class="t" style="left:4.6px;top:330.4px;"><span class="c" style="width:36px">透明度</span></span>
<span class="t v" style="left:126.3px;top:209.8px;font-family:'Liberation Serif',serif;font-size:13.5px;">0</span>
<span class="t v" style="left:146px;top:234.1px;">ByLayer</span>
<span class="t v" style="left:168px;top:258.1px;">ByLayer</span>
<span class="t v" style="left:171.8px;top:282.1px;">ByLayer</span>
<span class="t v" style="left:127px;top:306.1px;">1</span>
<span class="t v" style="left:125.6px;top:330.7px;">ByLayer</span>
<div class="abs" style="left:4.5px;top:189.5px;width:12.5px;height:1.4px;background:#e6e6e6"></div>
<div class="abs" style="left:125px;top:230px;width:18px;height:18px;background:#fff"></div>
<div class="abs" style="left:122.5px;top:262.7px;width:45px;height:1.3px;background:#d8d8d8"></div>
<div class="abs" style="left:122.5px;top:286.8px;width:42.5px;height:1px;background:#8a8d94"></div>
<div class="tri" style="left:197px;top:165.5px"></div>
<div class="tri trig" style="left:221px;top:214.3px"></div>
<div class="tri trig" style="left:221px;top:238.3px"></div>
<div class="tri trig" style="left:221px;top:262.3px"></div>
<div class="tri trig" style="left:221px;top:286.3px"></div>
<div class="tri trig" style="left:221px;top:334.3px"></div>
</aside>
<nav id="ribbon-labels">
<span class="t" style="left:14px;top:87.4px;"><span class="c" style="width:24px">直线</span></span>
<span class="t" style="left:60px;top:87.4px;"><span class="c" style="width:36px">多段线</span></span>
<span class="t" style="left:123.4px;top:87.4px;"><span class="c" style="width:12px">圆</span></span>
<span class="t" style="left:169.3px;top:87.4px;"><span class="c" style="width:24px">圆弧</span></span>
<span class="t" style="left:169.3px;top:113.6px;"><span class="c" style="width:24px">绘制</span></span>
<span class="t" style="left:232.5px;top:38.8px;"><span class="c" style="width:24px">矩形</span></span>
<span class="t" style="left:232.5px;top:64.2px;"><span class="c" style="width:24px">椭圆</span></span>
<span class="t" style="left:232.5px;top:89.1px;"><span class="c" style="width:24px">填充</span></span>
<span class="t" style="left:310.6px;top:38.8px;"><span class="c" style="width:48px">样条曲线</span></span>
<span class="t" style="left:310.6px;top:64.2px;"><span class="c" style="width:12px">点</span></span>
<span class="t" style="left:397px;top:38.8px;"><span class="c" style="width:24px">移动</span></span>
<span class="t" style="left:397px;top:64.2px;"><span class="c" style="width:24px">复制</span></span>
<span class="t" style="left:397px;top:89.1px;"><span class="c" style="width:24px">拉伸</span></span>
<span class="t" style="left:454px;top:38.8px;"><span class="c" style="width:24px">旋转</span></span>
<span class="t" style="left:454px;top:64.2px;"><span class="c" style="width:24px">镜像</span></span>
<span class="t" style="left:454px;top:89.1px;"><span class="c" style="width:24px">缩放</span></span>
<span class="t" style="left:510.3px;top:64.2px;"><span class="c" style="width:24px">延伸</span></span>
<span class="t" style="left:510.8px;top:89.1px;"><span class="c" style="width:24px">打断</span></span>
<span class="t" style="left:567px;top:38.8px;"><span class="c" style="width:24px">圆角</span></span>
<span class="t" style="left:567px;top:64.2px;"><span class="c" style="width:24px">倒角</span></span>
<span class="t" style="left:567px;top:89.1px;"><span class="c" style="width:24px">阵列</span></span>
<span class="t" style="left:484.3px;top:113.6px;"><span class="c" style="width:24px">修改</span></span>
<span class="t" style="left:629.6px;top:79.8px;"><span class="c" style="width:48px">多行文字</span></span>
<span class="t" style="left:693.4px;top:79.8px;"><span class="c" style="width:24px">线性</span></span>
<span class="t" style="left:694.8px;top:113.7px;"><span class="c" style="width:24px">注释</span></span>
<span class="t" style="left:756.7px;top:38.8px;"><span class="c" style="width:24px">引线</span></span>
<span class="t" style="left:756.7px;top:64.2px;"><span class="c" style="width:24px">云线</span></span>
<span class="t" style="left:756.7px;top:89.1px;"><span class="c" style="width:24px">表格</span></span>
<span class="t" style="left:802.2px;top:87.4px;"><span class="c" style="width:36px">插入块</span></span>
<span class="t" style="left:871.7px;top:38.8px;"><span class="c" style="width:36px">创建块</span></span>
<span class="t" style="left:871.7px;top:64.2px;"><span class="c" style="width:36px">块管理</span></span>
<span class="t" style="left:871.7px;top:89.1px;"><span class="c" style="width:48px">属性定义</span></span>
<span class="t" style="left:853.5px;top:113.6px;"><span class="c" style="width:12px">块</span></span>
<span class="t" style="left:958.3px;top:38.8px;"><span class="c" style="width:48px">外部参照</span></span>
<span class="t" style="left:958.3px;top:63.8px;"><span class="c" style="width:48px">插入图片</span></span>
<span class="t" style="left:963.6px;top:113.6px;"><span class="c" style="width:24px">插入</span></span>
<span class="t" style="left:1028.7px;top:87.4px;"><span class="c" style="width:48px">图层管理</span></span>
<span class="t" style="left:1173.2px;top:65.4px;"><span class="c" style="width:48px">置为当前</span></span>
<span class="t" style="left:1121px;top:114.1px;"><span class="c" style="width:24px">图层</span></span>
<span class="t" style="left:1253.4px;top:87.4px;"><span class="c" style="width:24px">特性</span></span>
<span class="t" style="left:20px;top:135.1px;"><span class="c" style="width:24px">开始</span></span>
<span class="t" style="left:510.6px;top:39.1px;color:#fff;"><span class="c" style="width:24px">修剪</span></span>
<span class="t" style="left:628.5px;top:10.2px;letter-spacing:0.2px;"><span class="c" style="width:24px">鸿鹄</span>CAD - 31</span>
<span class="t" style="left:84.3px;top:134px;font-size:11.5px;">31</span>
<span class="t" style="left:1161.8px;top:38.3px;font-family:'Liberation Serif',serif;font-size:13.5px;color:#f0f0f0;">0</span>
</nav>
<footer id="statusbar-labels">
<span class="t" style="left:14px;top:732.2px;"><span class="c" style="width:24px">模型</span></span>
<span class="t" style="left:62px;top:732.2px;"><span class="c" style="width:24px">布局</span>1</span>
<span class="t" style="left:113px;top:732.2px;"><span class="c" style="width:24px">布局</span>2</span>
<span class="t" style="left:1070px;top:731px;font-size:12px;letter-spacing:-0.4px;">1:1</span>
<span class="t" style="left:1106.9px;top:731px;font-size:12.5px;">2683.56, 1560.2</span>
</footer>
<div id="scroller" class="abs"></div>
<main id="drawing-overlay">
<div class="abs" style="left:662px;top:158px;width:189.5px;height:31px;background:#40444e;border-radius:4px"></div>
<div class="abs" style="left:526px;top:462.2px;width:112.5px;height:20px;background:#b4b4b4;border-radius:4px"></div>
<svg class="abs" style="left:0;top:0" width="1269" height="748" viewBox="0 0 1269 748">
<!-- red annotation (above everything) -->
<g fill="none" stroke="#e53a3a" stroke-width="2">
<rect x="478.4" y="23" width="67.7" height="46.9"/>
<rect x="644.1" y="156" width="220.3" height="38"/>
<path d="M582 72.7 L657 142.6"/>
<path d="M792.6 209.6 L543.5 434.7"/>
</g>
<path d="M662.3 147.6 L646.2 141.8 L656.5 132.2 Z" fill="#e53a3a"/>
<path d="M536.5 441 L541.7 425.7 L551.9 436.1 Z" fill="#e53a3a"/>
<!-- radio buttons -->
<circle cx="677.8" cy="173.4" r="5.5" fill="none" stroke="#e0e0e0" stroke-width="1.2"/>
<circle cx="768.3" cy="173.4" r="5.6" fill="none" stroke="#1f78f0" stroke-width="1.5"/>
<circle cx="768.3" cy="173.4" r="3" fill="#1f78f0"/>
<path d="M1263.6 72.8 L1269.6 79.4 L1263.6 86" fill="none" stroke="#d0d0d0" stroke-width="1.3"/>

</svg>
<span class="t" style="left:689.3px;top:166.6px;"><span class="c" style="width:48px">自动修剪</span>(A)</span>
<span class="t" style="left:779.2px;top:166.6px;"><span class="c" style="width:48px">选边修剪</span>(B)</span>
<span class="t" style="left:534.3px;top:466.5px;color:#262626;"><span class="c" style="width:96px">选择要修剪的对象</span></span>
<div class="abs lab" style="left:574.8px;top:318.8px;width:92.7px;height:41px"></div>
<div class="abs lab" style="left:573.3px;top:620px;width:93.2px;height:41px"></div>
<div class="abs lab" style="left:528px;top:497.5px;width:112.2px;height:40.7px"></div>
<span class="t lt" style="left:591.6px;top:328.2px;line-height:24px;"><span class="c" style="width:59.7px">剪切边</span></span>
<span class="t lt" style="left:590.2px;top:629.7px;line-height:24px;"><span class="c" style="width:59.7px">剪切边</span></span>
<span class="t lt" style="left:544px;top:506.5px;line-height:24px;"><span class="c" style="width:79.6px">剪切对象</span></span>
<div class="abs badge" style="left:535.7px;top:318px">1</div>
<div class="abs badge" style="left:534px;top:619.2px">2</div>
<div class="abs badge" style="left:488.6px;top:496.3px">3</div>
</main>
</body>
</html>
